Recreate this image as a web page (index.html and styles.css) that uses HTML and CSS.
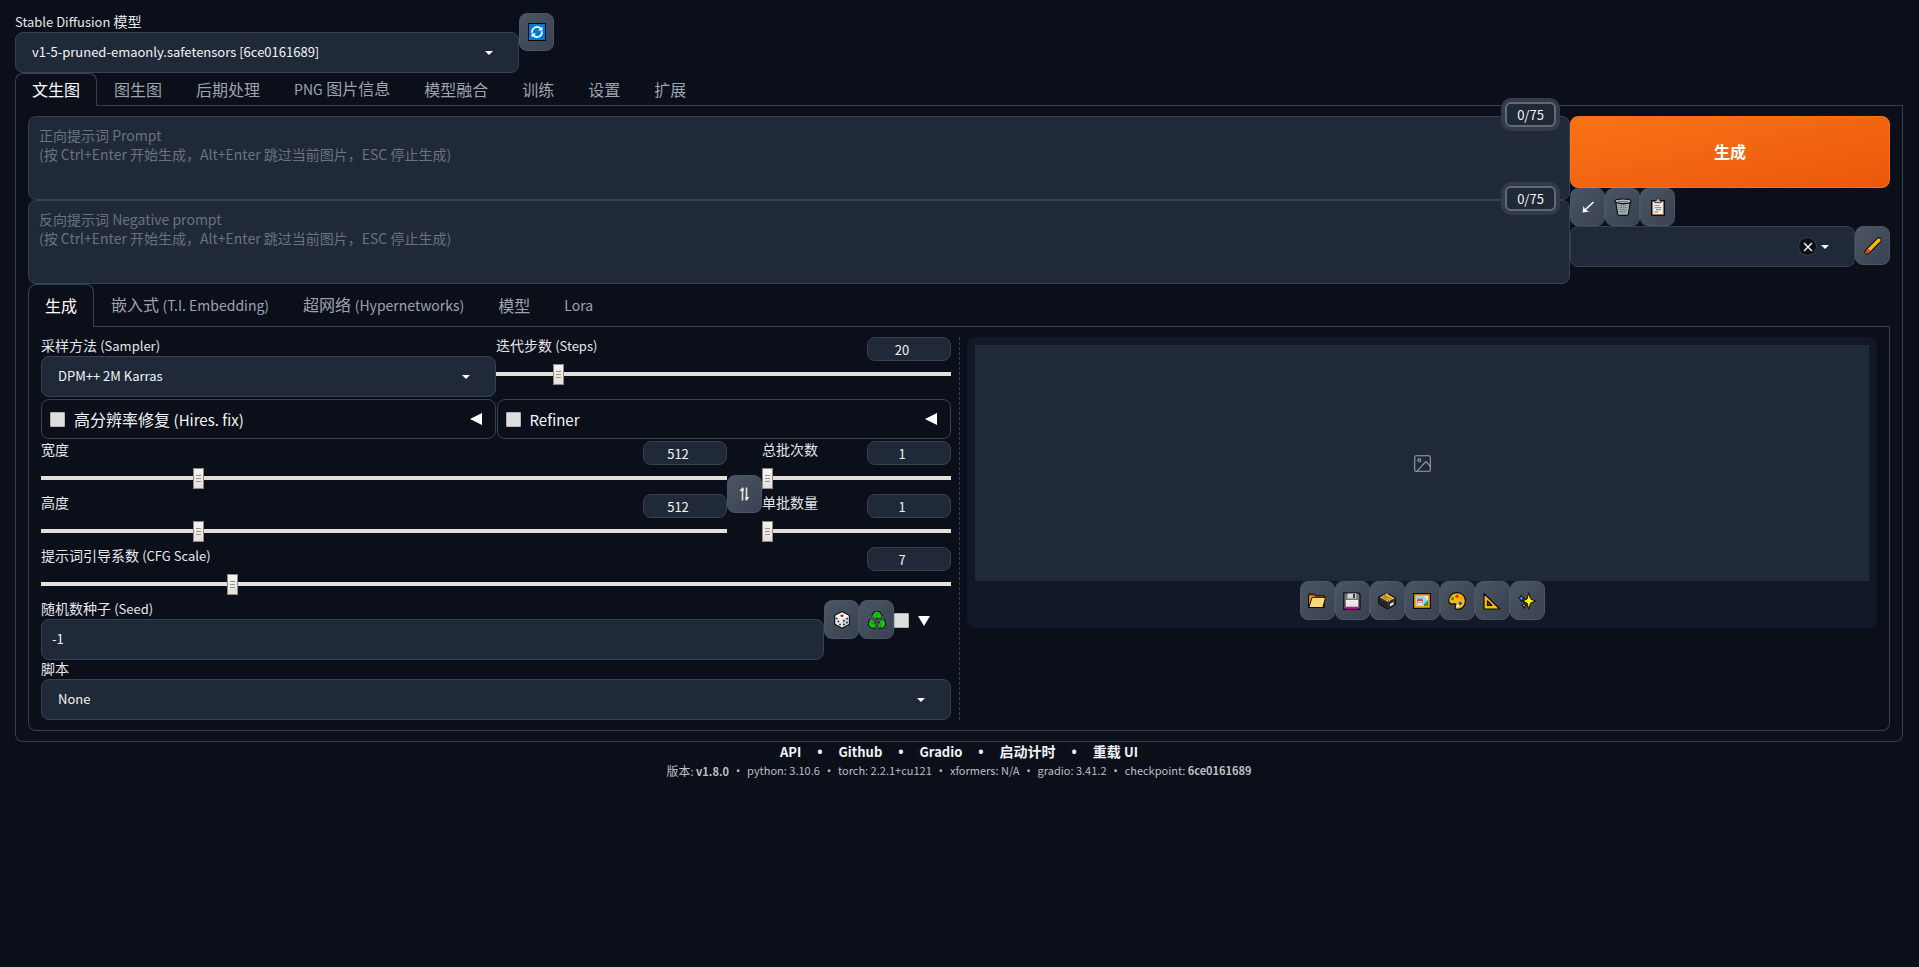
FILE: index.html
```html
<!DOCTYPE html>
<html lang="zh-CN">
<head>
<meta charset="utf-8">
<title>Stable Diffusion</title>
<link rel="stylesheet" href="styles.css">
</head>
<body>
<header class="quick">
  <div class="field quick-model">
    <label class="label" for="model"><span class="en">Stable Diffusion</span> 模型</label>
    <div class="picker"><select id="model"><option>v1-5-pruned-emaonly.safetensors [6ce0161689]</option></select></div>
  </div>
  <button class="tool" aria-label="刷新"><svg class="icon" viewBox="0 0 18 18"><path fill="#0a0a0a" d="M0 0h18v18H0z"/><path fill="#0078d7" d="M1 1h16v16H1z"/><path fill="none" stroke="#fff" stroke-width="1.7" d="M4.3 9.8A4.8 4.8 0 0 1 12.6 5.6M13.7 8.2A4.8 4.8 0 0 1 5.4 12.4"/><path fill="#fff" d="M10 7.5h4.4V3.4zM8 10.5H3.600v4.100z"/></svg></button>
</header>

<nav class="tabs">
  <button class="tab active">文生图</button><button class="tab">图生图</button><button class="tab">后期处理</button><button class="tab"><span class="en-tab">PNG</span> 图片信息</button><button class="tab">模型融合</button><button class="tab">训练</button><button class="tab">设置</button><button class="tab">扩展</button>
</nav>

<main class="panel">
  <section class="top">
    <div class="prompts">
      <div class="prompt">
        <textarea aria-label="正向提示词" placeholder="正向提示词 Prompt&#10;(按 Ctrl+Enter 开始生成，Alt+Enter 跳过当前图片，ESC 停止生成)"></textarea>
        <span class="counter">0/75</span>
      </div>
      <div class="prompt">
        <textarea aria-label="反向提示词" placeholder="反向提示词 Negative prompt&#10;(按 Ctrl+Enter 开始生成，Alt+Enter 跳过当前图片，ESC 停止生成)"></textarea>
        <span class="counter">0/75</span>
      </div>
    </div>
    <div class="actions">
      <button class="generate">生成</button>
      <div class="tools">
        <button class="tool" aria-label="读取参数"><svg class="icon" viewBox="0 0 18 18"><path fill="none" stroke="#fff" stroke-width="1.600" d="M14.500 4 6 12"/><path fill="#fff" d="M3.500 14.500 4.500 8l1.500 3 1.200 1.200L10.500 13.500z"/></svg></button>
        <button class="tool" aria-label="清空"><svg class="icon" viewBox="0 0 18 18"><path fill="#a3b1b5" stroke="#0c0c0c" stroke-width="1.200" d="M1.800 4.500 3.500 15.500q.3 1.900 2 1.900h7q1.700 0 2-1.900l1.700-11z"/><path stroke="#5f6d71" stroke-width=".8" stroke-dasharray="1.200 1.200" fill="none" d="M4 7.500h10M4.500 9.500h9M4.500 11.500h9M5 13.500h8M7 6v10M9 6v10M11 6v10"/><ellipse cx="9" cy="3.300" rx="8.200" ry="2.300" fill="#b7c3c6" stroke="#0c0c0c" stroke-width="1.200"/><path stroke="#6b7a7e" d="M4 3.500h10"/></svg></button>
        <button class="tool" aria-label="粘贴"><svg class="icon" viewBox="0 0 18 18"><path fill="#c58a5a" stroke="#0c0c0c" stroke-width="1.200" d="M2.600 2.600h12.800v14.800H2.600z"/><path fill="#f2f2f4" d="M4.200 4h9.600v12H4.200z"/><path fill="#c9cdd0" stroke="#222" stroke-width=".9" d="M6 4.700V2.500h1.500q0-2 1.500-2t1.500 2H12v2.200z"/><path stroke="#8b9096" stroke-width="1.200" d="M5.500 7.500h5M5.500 9.600h7M7 11.700h5M5.500 13.800h4"/></svg></button>
      </div>
      <div class="styles">
        <div class="picker wide"><select aria-label="预设样式"><option></option></select><button class="clear" aria-label="清除"><svg viewBox="0 0 12 12"><path fill="none" stroke="#f3f4f6" stroke-width="1.500" d="m2 2 8 8M10 2l-8 8"/></svg></button></div>
        <button class="tool tall" aria-label="编辑样式"><svg class="icon" viewBox="0 0 18 18"><path fill="none" stroke="#0b0b0b" stroke-width="5.500" stroke-linecap="round" d="M3.300 14.700 15 3"/><path fill="none" stroke="#fdb900" stroke-width="3.500" stroke-linecap="round" d="M6 12 15 3"/><path fill="#d4d8da" d="m4.800 10.800 2.400 2.400-1 1L3.800 11.800z"/><path fill="#d8501b" d="M1.300 16.700q.1-4.500 2.800-5 2.300.2 2.200 2.500-.6 2.500-5 2.500z"/></svg></button>
      </div>
    </div>
  </section>

  <nav class="tabs inner">
    <button class="tab active">生成</button><button class="tab">嵌入式 <span class="en-tab">(T.I. Embedding)</span></button><button class="tab">超网络 <span class="en-tab">(Hypernetworks)</span></button><button class="tab">模型</button><button class="tab"><span class="en-tab">Lora</span></button>
  </nav>

  <section class="panel work">
    <div class="settings">
      <div class="pair">
        <div class="field">
          <label class="label" for="sampler">采样方法 <span class="en">(Sampler)</span></label>
          <div class="picker"><select id="sampler"><option>DPM++ 2M Karras</option></select></div>
        </div>
        <div class="slider">
          <div class="slider-head"><label class="label" for="steps">迭代步数 <span class="en">(Steps)</span></label><input type="number" value="20" aria-label="迭代步数"></div>
          <input id="steps" type="range" min="1" max="150" value="20">
        </div>
      </div>
      <div class="pair folds">
        <div class="fold"><input type="checkbox" id="hires"><label for="hires">高分辨率修复 <span class="en-lg">(Hires. fix)</span></label><button class="arrow" aria-label="展开"></button></div>
        <div class="fold"><input type="checkbox" id="refiner"><label for="refiner"><span class="en-lg">Refiner</span></label><button class="arrow" aria-label="展开"></button></div>
      </div>
      <div class="dims">
        <div>
          <div class="slider">
            <div class="slider-head"><label class="label" for="width">宽度</label><input type="number" value="512" aria-label="宽度"></div>
            <input id="width" type="range" min="64" max="2048" value="512">
          </div>
          <div class="slider">
            <div class="slider-head"><label class="label" for="height">高度</label><input type="number" value="512" aria-label="高度"></div>
            <input id="height" type="range" min="64" max="2048" value="512">
          </div>
        </div>
        <button class="tool swap" aria-label="交换宽高"><svg class="icon" viewBox="0 0 18 18"><path fill="none" stroke="#e8e6dc" stroke-width="1.600" d="M6.500 15.500V4M10.500 2.500V14"/><path fill="#e8e6dc" d="m3.500 6 3-4 1.200 1.500V6zM13.500 12l-3 4-1.200-1.500V12z"/></svg></button>
        <div>
          <div class="slider">
            <div class="slider-head"><label class="label" for="count">总批次数</label><input type="number" value="1" aria-label="总批次数"></div>
            <input id="count" type="range" min="1" max="100" value="1">
          </div>
          <div class="slider">
            <div class="slider-head"><label class="label" for="size">单批数量</label><input type="number" value="1" aria-label="单批数量"></div>
            <input id="size" type="range" min="1" max="8" value="1">
          </div>
        </div>
      </div>
      <div class="slider">
        <div class="slider-head"><label class="label" for="cfg">提示词引导系数 <span class="en">(CFG Scale)</span></label><input type="number" value="7" aria-label="提示词引导系数"></div>
        <input id="cfg" type="range" min="1" max="30" value="7">
      </div>
      <div class="seed">
        <div class="field">
          <label class="label" for="seed">随机数种子 <span class="en">(Seed)</span></label>
          <input class="text" id="seed" type="text" value="-1">
        </div>
        <button class="tool tall" aria-label="随机种子"><svg class="icon" viewBox="0 0 18 18"><path fill="#ececec" stroke="#0c0c0c" stroke-width="1.200" stroke-linejoin="round" d="m9 .8 7.300 3.700v8.800L9 17.300l-7.300-4V4.500z"/><path fill="#fff" d="M9 1.500 15.500 4.700 9 8 2.500 4.700z"/><path fill="#d2d2d4" d="M9 8.300 15.600 5v7.900L9 16.500z"/><ellipse cx="9" cy="4.700" rx="1.700" ry="1.200" fill="#c8141e"/><g fill="#222"><circle cx="3.800" cy="7.600" r=".9"/><circle cx="7" cy="13.500" r=".9"/><circle cx="5.400" cy="10.500" r=".9"/><circle cx="14.200" cy="7.800" r=".9"/><circle cx="11" cy="9.800" r=".9"/><circle cx="14" cy="11.500" r=".9"/><circle cx="11" cy="13.500" r=".9"/></g></svg></button>
        <button class="tool tall" aria-label="复用种子"><svg class="icon" viewBox="0 0 18 18" fill="none" stroke-linejoin="round"><path stroke="#0c0c0c" stroke-width="6.500" d="M6 6.500 7.800 3.500Q9 2 10.200 3.500L12 6.500M4.500 9.500 3.300 12q-.5 2.200 1.500 2.400h2.700M13.500 9.500 14.700 12q.5 2.200-1.500 2.400h-2.700"/><path stroke="#16c60c" stroke-width="4.500" d="M6 6.500 7.800 3.500Q9 2 10.200 3.500L12 6.500M4.500 9.500 3.300 12q-.5 2.200 1.500 2.400h2.700M13.500 9.500 14.700 12q.5 2.200-1.500 2.400h-2.700"/><path stroke="#0b6b08" stroke-width=".7" d="m8 5.500 1.800-3.500M3 11.500l3.500 1.500M12.500 16l-.5-3.500"/></svg></button>
        <input type="checkbox" aria-label="更多种子选项">
        <button class="arrow down" aria-label="收起"></button>
      </div>
      <div class="field">
        <label class="label" for="script">脚本</label>
        <div class="picker"><select id="script"><option>None</option></select></div>
      </div>
    </div>

    <div class="divider"></div>

    <div class="gallery">
      <div class="preview"><svg viewBox="0 0 24 24" fill="none" stroke="#9ca3af" stroke-width="1.500" stroke-linecap="round" stroke-linejoin="round"><rect x="1" y="1" width="22" height="22" rx="2"/><circle cx="7.500" cy="7.500" r="2"/><path d="m23 16-6-7L4 23"/></svg></div>
      <div class="tools centered">
        <button class="tool tall" aria-label="打开目录"><svg class="icon" viewBox="0 0 18 18"><path fill="#f3a10e" stroke="#0c0c0c" stroke-width="1.200" d="M.6 15.400V3.200q0-1 1-1H6l1.500 1.600H16v11.600z"/><path fill="#e8352b" d="M1.200 2.900h4V4h-4z"/><path fill="#ffd679" stroke="#0c0c0c" stroke-width="1" d="M.9 15.500 4 5.300h13.600l-2.700 10.200z"/></svg></button>
        <button class="tool tall" aria-label="保存"><svg class="icon" viewBox="0 0 18 18"><path fill="#777" stroke="#0c0c0c" stroke-width="1.200" d="M.8 1h14.700L17 2.500v14.700H.8z"/><path fill="#d6d6d6" d="M4.500 1.500h8.800v5H4.500z"/><path fill="#333" d="M10 2h2v4h-2z"/><path fill="#f4f4f4" d="M3 8h12v6.800H3z"/><path stroke="#c8c8c8" stroke-width=".7" d="M4 10h10M4 12.500h10"/><path fill="#e3008c" d="M3 14.700h12v2H3z"/></svg></button>
        <button class="tool tall" aria-label="打包下载"><svg class="icon" viewBox="0 0 18 18"><path fill="#333" stroke="#0a0a0a" stroke-linejoin="round" d="M.6 5 9 1l8.600 5v6.500L9.500 17 .6 12z"/><path fill="#242424" d="M1 6.300 9.500 11v5.500L1 11.700z"/><path fill="#f6b83e" d="M2 5.200 8.500 1.500 16.600 6.200 9.800 9.800z"/><path stroke="#b8651a" d="m4 4.500 7 4M6 3.300l7.500 4"/><path fill="#2fa84f" d="m6 5 1.500-1 1.500.8L7.500 6z"/><path fill="#f08a24" d="m8 2 2-1.200V3z"/><path fill="#e8e8e8" d="m12 12 3.500-2v2.500L12 14.400z"/></svg></button>
        <button class="tool tall" aria-label="发送到图生图"><svg class="icon" viewBox="0 0 18 18"><path fill="#f5a50b" stroke="#0c0c0c" stroke-width="1.200" d="M.6 1.600h16.800v14.800H.6z"/><path fill="#9bd8f5" d="M3 4h12v10H3z"/><path fill="#e6edf2" d="m9 4 3 1 3 5V4z"/><path fill="#2f9e44" d="m11 12 4-4v6h-4z"/><path fill="#d9403a" d="m4 10 1-4 2 1.500L9 6l1 4z"/><path fill="#f6e5df" d="M5 9h4v4H5z"/><path fill="#333" d="M5.700 10h.8v1h-.8zM7.700 10h.8v1h-.8z"/></svg></button>
        <button class="tool tall" aria-label="发送到重绘"><svg class="icon" viewBox="0 0 18 18"><path fill="#ffb900" stroke="#0c0c0c" stroke-width="1.200" d="M9 .7c5 0 8.400 3.500 8.400 8.300 0 5-3.600 8.400-8 8.400-2.400 0-2.800-1.700-1.900-3.200 1-1.700.2-2.800-1.500-2.400C3 12.500.7 11.700.7 8.500.9 4 4.500.7 9 .7z"/><circle cx="9" cy="4.200" r="1.700" fill="#e8352b"/><circle cx="4.500" cy="6.700" r="1.600" fill="#21a637"/><circle cx="13.300" cy="6" r="1.500" fill="#ff8c00"/><circle cx="12.300" cy="11.300" r="1.700" fill="#1f55d8"/><circle cx="9.600" cy="14" r="1.300" fill="#fff"/></svg></button>
        <button class="tool tall" aria-label="发送到后期处理"><svg class="icon" viewBox="0 0 18 18"><path fill="#ffb900" stroke="#0c0c0c" stroke-width="1.200" stroke-linejoin="round" fill-rule="evenodd" d="M1 1.500 16.800 17H1zM4.500 9v4.500H9z"/></svg></button>
        <button class="tool tall" aria-label="高清修复"><svg class="icon" viewBox="0 0 18 18"><g stroke="#0c0c0c" stroke-width="1" stroke-linejoin="round"><path fill="#fff100" d="m10.800 .8 1.800 6.200 5 2-5 2-1.800 6.400L9 11 4.300 9 9 7z"/><path fill="#2bc4f3" d="m3.300 3 .9 2.500 2.300.8-2.300.9-.9 2.600-.9-2.600L.4 6.300l2-.8z"/><path fill="#f48fb1" d="m6 10.800.7 2 1.800.7-1.800.7-.7 2.300-.8-2.300-1.700-.7 1.700-.7z"/></g></svg></button>
      </div>
    </div>
  </section>
</main>

<footer class="footer">
  <div class="links"><a class="en" href="#">API</a><span class="dot">•</span><a class="en" href="#">Github</a><span class="dot">•</span><a class="en" href="#">Gradio</a><span class="dot">•</span><a href="#">启动计时</a><span class="dot">•</span><a href="#">重载 <span class="en">UI</span></a></div>
  <div class="versions"><span><span class="zh">版本</span>: <b>v1.8.0</b></span><span class="dot">•</span><span>python: 3.10.6</span><span class="dot">•</span><span>torch: 2.2.1+cu121</span><span class="dot">•</span><span>xformers: N/A</span><span class="dot">•</span><span>gradio: 3.41.2</span><span class="dot">•</span><span>checkpoint: <b>6ce0161689</b></span></div>
</footer>
</body>
</html>
```
FILE: styles.css
```css
:root {
  --page: #0b0f19;
  --surface: #1f2937;
  --line: #374151;
  --text: #f3f4f6;
}

* { box-sizing: border-box; }

body {
  margin: 0;
  padding: 13px 16px 13px 15px;
  background: var(--page);
  color: var(--text);
  font: 14px/19px "Noto Sans CJK SC", sans-serif;
}

button, input, select, textarea { font: inherit; color: inherit; margin: 0; }
button { padding: 0; background: none; border: 0; }

/* Latin runs are set smaller than the Chinese text beside them. */
.en { font-size: 13px; }
.en-tab { font-size: 14px; }
.en-lg { font-size: 15px; }

.label { display: block; height: 19px; line-height: 17px; color: #e5e7eb; white-space: nowrap; }

.quick { display: flex; align-items: flex-start; }
.quick-model { width: 504px; }

.picker { position: relative; display: flex; align-items: center; }
.picker select, .text {
  appearance: none;
  width: 100%;
  height: 41px;
  padding: 0 16px 2px;
  background: var(--surface);
  border: 1px solid var(--line);
  border-radius: 8px;
  font-size: 13px;
}
.text { display: block; padding: 0 10px 2px; }
.picker::after {
  content: "";
  position: absolute;
  right: 26px;
  top: 19px;
  border: 4px solid transparent;
  border-top-color: #fff;
  border-bottom: 0;
  pointer-events: none;
}
.clear {
  position: absolute;
  right: 38px;
  width: 19px;
  height: 19px;
  display: grid;
  place-items: center;
  background: var(--page);
  border: 1px solid var(--line);
  border-radius: 50%;
}
.clear svg { width: 12px; height: 12px; }

.tool {
  flex: none;
  width: 35px;
  height: 38px;
  display: grid;
  place-items: center;
  background: linear-gradient(to bottom right, #4b5563, #374151);
  border: 1px solid #4b5563;
  border-radius: 8px;
}
.tall { height: 39px; }
.icon { width: 18px; height: 18px; }

.tabs { display: flex; border-bottom: 1px solid var(--line); }
.tab {
  height: 33px;
  padding: 0 16px 2px;
  margin-bottom: -1px;
  border: 1px solid transparent;
  border-bottom: 0;
  border-radius: 8px 8px 0 0;
  color: #9ca3af;
  font-size: 16px;
}
.tab.active { background: var(--page); border-color: var(--line); color: #fff; }
.inner .tab { height: 43px; }

.panel {
  padding: 10px 12px;
  border: 1px solid var(--line);
  border-top: 0;
  border-radius: 0 0 8px 8px;
}

.top { display: grid; grid-template-columns: 1fr 320px; }
.prompt { position: relative; height: 84px; }
.prompt textarea {
  display: block;
  width: 100%;
  height: 100%;
  padding: 9px 10px;
  resize: none;
  background: var(--surface);
  border: 1px solid var(--line);
  border-radius: 8px;
}
.prompt textarea::placeholder { color: #6b7280; }
.counter {
  position: absolute;
  top: -14px;
  right: 14px;
  width: 51px;
  height: 25px;
  display: grid;
  place-items: center;
  background: var(--surface);
  border: 2px solid #646a72;
  border-radius: 6px;
  box-shadow: 0 0 0 4px #343b48;
  font-size: 13px;
}

.generate {
  display: block;
  width: 100%;
  height: 72px;
  padding-bottom: 2px;
  background: linear-gradient(to bottom right, #f97316, #ea580c);
  border: 1px solid #f97316;
  border-radius: 8px;
  color: #fff;
  font-size: 16px;
  font-weight: 700;
}
.tools, .styles { display: flex; }
.wide { flex: 1; }

.work { display: grid; grid-template-columns: 1fr 16px 1fr; }
.pair { display: grid; grid-template-columns: 1fr 1fr; }
.folds { margin: 2px 0; gap: 1px; }
.fold {
  display: flex;
  align-items: center;
  height: 40px;
  padding: 0 13px 0 8px;
  border: 1px solid var(--line);
  border-radius: 8px;
  font-size: 16px;
  gap: 9px;
}
.fold .arrow { margin-left: auto; }
.arrow {
  width: 0;
  height: 0;
  border: solid transparent;
  border-width: 6px 12px 6px 0;
  border-right-color: #fff;
}
.arrow.down { border-width: 10px 6px 0; border-color: #fff transparent transparent; }

input[type="checkbox"] {
  appearance: none;
  width: 15px;
  height: 15px;
  background: #dedede;
  border: 1px solid #b4b4b4;
  border-radius: 1px;
}

.slider { height: 53px; }
.slider-head { display: flex; justify-content: space-between; height: 24px; margin-bottom: 2px; }
input[type="number"] {
  appearance: textfield;
  width: 84px;
  height: 24px;
  padding: 0 22px 0 8px;
  text-align: center;
  background: var(--surface);
  border: 1px solid var(--line);
  border-radius: 8px;
  font-size: 13px;
}
input[type="number"]::-webkit-inner-spin-button { display: none; }
input[type="range"] { appearance: none; display: block; width: 100%; height: 21px; background: none; }
input[type="range"]::-webkit-slider-runnable-track { height: 4px; background: #e4dfd8; }
input[type="range"]::-webkit-slider-thumb {
  appearance: none;
  width: 11px;
  height: 21px;
  margin-top: -8px;
  border: 1px solid #8f8780;
  background:
    linear-gradient(#9a948e, #9a948e) center 6px / 5px 1px no-repeat,
    linear-gradient(#9a948e, #9a948e) center 9px / 5px 1px no-repeat,
    linear-gradient(#9a948e, #9a948e) center 12px / 5px 1px no-repeat,
    linear-gradient(#f6f4f1, #e6e0dc);
}

.dims { display: grid; grid-template-columns: 1fr 35px 189px; }
.swap { align-self: center; }

.seed { display: flex; align-items: flex-start; }
.seed .field { flex: 1; }
.seed input[type="checkbox"] { margin-top: 13px; }
.seed .arrow { margin: 16px 21px 0 9px; }

.divider { justify-self: center; width: 1px; border-left: 1px dashed var(--line); }

.gallery { align-self: start; padding: 8px; background: #111827; border-radius: 8px; }
.preview { height: 236px; display: grid; place-items: center; background: var(--surface); }
.preview svg { width: 17px; height: 17px; }
.centered { justify-content: center; }

.footer { text-align: center; }
.links, .versions { display: flex; justify-content: center; }
.links { gap: 16px; font-weight: 700; }
.links a { color: inherit; text-decoration: none; }
.versions { gap: 7px; font-size: 11px; color: #bdbfc3; }
.zh { font-size: 12px; }
.dot { font-family: "Noto Sans", sans-serif; }
```
